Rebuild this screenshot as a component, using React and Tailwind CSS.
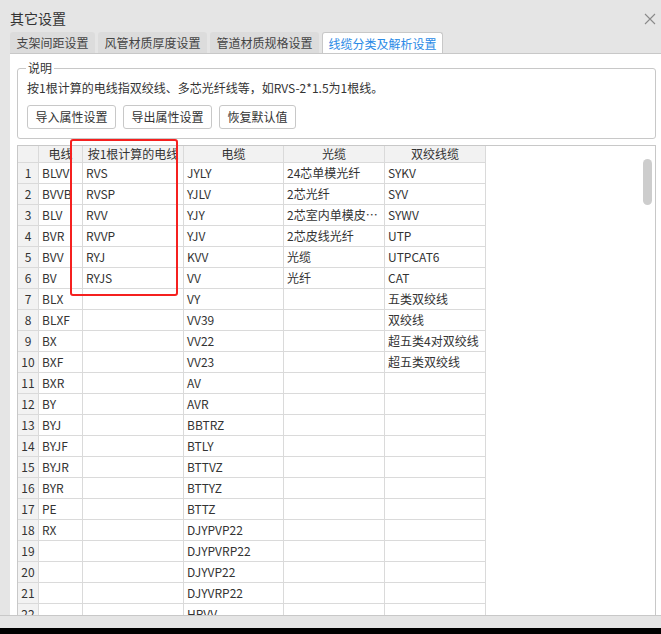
import React from 'react';

const rows = [
  ['BLVV', 'RVS', 'JYLY', '24芯单模光纤', 'SYKV'],
  ['BVVB', 'RVSP', 'YJLV', '2芯光纤', 'SYV'],
  ['BLV', 'RVV', 'YJY', '2芯室内单模皮线光纤', 'SYWV'],
  ['BVR', 'RVVP', 'YJV', '2芯皮线光纤', 'UTP'],
  ['BVV', 'RYJ', 'KVV', '光缆', 'UTPCAT6'],
  ['BV', 'RYJS', 'VV', '光纤', 'CAT'],
  ['BLX', '', 'VY', '', '五类双绞线'],
  ['BLXF', '', 'VV39', '', '双绞线'],
  ['BX', '', 'VV22', '', '超五类4对双绞线'],
  ['BXF', '', 'VV23', '', '超五类双绞线'],
  ['BXR', '', 'AV', '', ''],
  ['BY', '', 'AVR', '', ''],
  ['BYJ', '', 'BBTRZ', '', ''],
  ['BYJF', '', 'BTLY', '', ''],
  ['BYJR', '', 'BTTVZ', '', ''],
  ['BYR', '', 'BTTYZ', '', ''],
  ['PE', '', 'BTTZ', '', ''],
  ['RX', '', 'DJYPVP22', '', ''],
  ['', '', 'DJYPVRP22', '', ''],
  ['', '', 'DJYVP22', '', ''],
  ['', '', 'DJYVRP22', '', ''],
  ['', '', 'HPVV', '', ''],
];

const tabs = ['支架间距设置', '风管材质厚度设置', '管道材质规格设置'];

const Cell = ({ w, children, className = '' }) => (
  <div className={`shrink-0 overflow-hidden whitespace-nowrap border-r border-[#dadada] ${w} ${className}`}>
    {children}
  </div>
);

export default function App() {
  return (
    <div
      className="flex h-[634px] w-[661px] flex-col overflow-hidden bg-[#e5e5e5] text-[#333]"
      style={{ fontFamily: '"Noto Sans CJK SC", sans-serif' }}
    >
      {/* title */}
      <div className="flex h-[32px] shrink-0 items-start justify-between pl-[10px] pr-[5px] pt-[8px]">
        <span className="text-[14px] leading-[20px]">其它设置</span>
        <svg width="12" height="12" viewBox="0 0 12 12" className="mt-[5px]">
          <path d="M1 1 L11 11 M11 1 L1 11" stroke="#8a8a8a" strokeWidth="1.1" />
        </svg>
      </div>

      {/* tabs */}
      <div className="flex h-[21px] shrink-0 items-end gap-[3px] pl-[10px]">
        {tabs.map((t) => (
          <div
            key={t}
            className="flex h-[21px] items-center rounded-t-[3px] bg-[#dcdcdc] px-[6.5px] text-[12px] leading-none text-[#444]"
          >
            {t}
          </div>
        ))}
        <div className="relative -mb-px flex h-[22px] items-center rounded-t-[3px] border border-b-0 border-[#c8c8c8] bg-white px-[5.5px] text-[12px] leading-none text-[#2a8ae6]">
          线缆分类及解析设置
        </div>
      </div>

      {/* panel */}
      <div className="relative ml-[10px] flex min-h-0 flex-1 flex-col overflow-hidden border-t border-[#c8c8c8] bg-white pl-[7px] pr-[5px]">
        {/* group box */}
        <div className="relative mt-[14px] shrink-0 rounded-[3px] border border-[#c8c8c8] pb-[9px] pl-[9px] pt-[11px]">
          <span className="absolute left-[8px] top-[-9px] bg-white px-[2px] text-[12px] leading-[16px]">说明</span>
          <div className="text-[12px] leading-[16px]">按1根计算的电线指双绞线、多芯光纤线等，如RVS-2*1.5为1根线。</div>
          <div className="mt-[9px] flex gap-[7px]">
            {['导入属性设置', '导出属性设置', '恢复默认值'].map((b) => (
              <div
                key={b}
                className="flex h-[24px] items-center rounded-[3px] border border-[#c8c8c8] bg-white px-[7.5px] text-[12px] leading-none"
              >
                {b}
              </div>
            ))}
          </div>
        </div>

        {/* grid */}
        <div className="relative mt-[6px] min-h-0 flex-1 border border-b-0 border-[#c8c8c8] text-[12px]">
          <div className="flex h-[17px] w-fit border-b border-[#dadada] bg-[#f2f2f2] leading-[16px]">
            <Cell w="w-[21px]" />
            <Cell w="w-[44px]" className="text-center">电线</Cell>
            <Cell w="w-[101px]" className="flex justify-center">按1根计算的电线</Cell>
            <Cell w="w-[100px]" className="text-center">电缆</Cell>
            <Cell w="w-[101px]" className="text-center">光缆</Cell>
            <Cell w="w-[101px]" className="text-center">双绞线缆</Cell>
          </div>
          {rows.map((r, i) => (
            <div key={i} className="flex h-[21px] w-fit items-center border-b border-[#dadada] leading-[20px]">
              <Cell w="w-[21px]" className="h-full bg-[#f2f2f2] text-center">{i + 1}</Cell>
              <Cell w="w-[44px]" className="h-full pl-[3px]">{r[0]}</Cell>
              <Cell w="w-[101px]" className="h-full pl-[3px]">{r[1]}</Cell>
              <Cell w="w-[100px]" className="h-full pl-[3px]">{r[2]}</Cell>
              <Cell w="w-[101px]" className="h-full truncate pl-[3px]">{r[3]}</Cell>
              <Cell w="w-[101px]" className="h-full pl-[3px]">{r[4]}</Cell>
            </div>
          ))}
          <div className="absolute right-[3px] top-[13px] h-[46px] w-[9px] rounded-full bg-[#cdcdcd]" />
        </div>

        {/* highlight */}
        <div className="absolute left-[60px] top-[85px] h-[157px] w-[108px] rounded-[3px] border-2 border-[#f5201f]" />
      </div>

      <div className="h-[13px] shrink-0 border-t border-[#c8c8c8] bg-[#e5e5e5]" />
      <div className="h-[6px] shrink-0 bg-black" />
    </div>
  );
}
